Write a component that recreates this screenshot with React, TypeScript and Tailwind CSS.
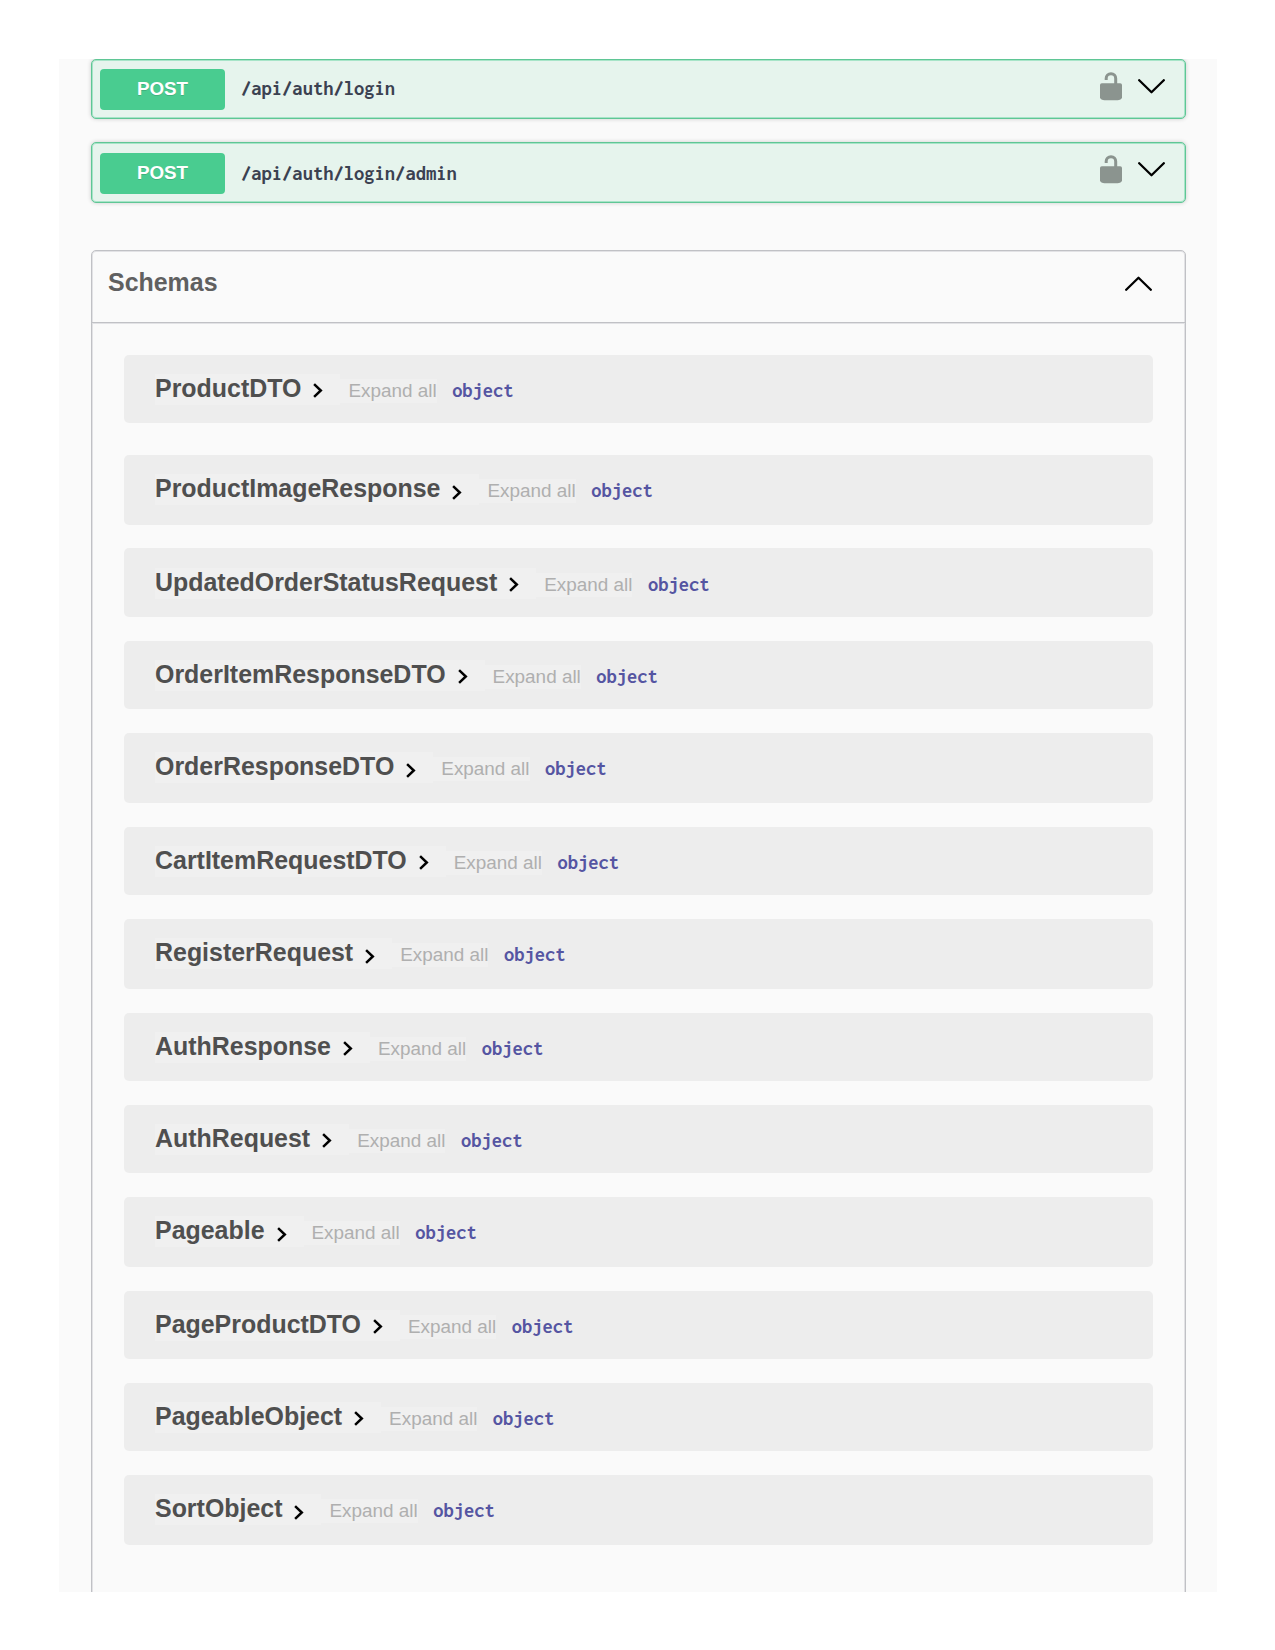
type Operation = { path: string; box: string; row: string; label: string; icons: string };
type Schema = { name: string; box: string; arrow: string };

const operations: Operation[] = [
  { path: '/api/auth/login', box: 'h-[60px]', row: 'pt-[9px]', label: 'mt-[5px]', icons: 'mt-[3px]' },
  { path: '/api/auth/login/admin', box: 'mt-[23px] h-[61px]', row: 'pt-[10px]', label: 'mt-[6px]', icons: 'mt-[2px]' },
];

const SHORT = 'pt-[9px]';
const TALL = 'pt-[11px]';

const schemas: Schema[] = [
  { name: 'ProductDTO', box: 'pt-[19px] h-[68px]', arrow: SHORT },
  { name: 'ProductImageResponse', box: 'pt-[19px] mt-8 h-[70px]', arrow: TALL },
  { name: 'UpdatedOrderStatusRequest', box: 'pt-5 mt-[23px] h-[69px]', arrow: SHORT },
  { name: 'OrderItemResponseDTO', box: 'pt-[19px] mt-6 h-[68px]', arrow: SHORT },
  { name: 'OrderResponseDTO', box: 'pt-[19px] mt-6 h-[70px]', arrow: TALL },
  { name: 'CartItemRequestDTO', box: 'pt-[19px] mt-6 h-[68px]', arrow: SHORT },
  { name: 'RegisterRequest', box: 'pt-[19px] mt-6 h-[70px]', arrow: TALL },
  { name: 'AuthResponse', box: 'pt-[19px] mt-6 h-[68px]', arrow: SHORT },
  { name: 'AuthRequest', box: 'pt-[19px] mt-6 h-[68px]', arrow: SHORT },
  { name: 'Pageable', box: 'pt-[19px] mt-6 h-[70px]', arrow: TALL },
  { name: 'PageProductDTO', box: 'pt-[19px] mt-6 h-[68px]', arrow: SHORT },
  { name: 'PageableObject', box: 'pt-[19px] mt-6 h-[68px]', arrow: SHORT },
  { name: 'SortObject', box: 'pt-[19px] mt-6 h-[70px]', arrow: TALL },
];

function UnlockIcon() {
  return (
    <svg className="h-[29px] w-[22px] shrink-0" viewBox="0 0 22 29" fill="none">
      <path d="M6.2 8V6.2C6.2 3.6 8.2 1.7 11 1.7s4.7 2 4.7 4.7V13" stroke="#8b948f" strokeWidth="3" />
      <path d="M1.8 11.3h18.4q1.8 0 1.8 1.8v12.2q0 1.5-1.5 2.2-1.5.7-3 .7H4.5q-1.5 0-3-.7Q0 26.8 0 25.3V13.1q0-1.8 1.8-1.8z" fill="#8b948f" />
    </svg>
  );
}

function Chevron({ up = false }: { up?: boolean }) {
  return (
    <svg className={up ? 'h-[15px] w-[27px] shrink-0 rotate-180' : 'h-[15px] w-[27px] shrink-0'} viewBox="0 0 27 15" fill="none">
      <path d="M1.2 1.2 13.5 13.2 25.8 1.2" stroke="#000" strokeWidth="2.3" strokeLinecap="round" strokeLinejoin="round" />
    </svg>
  );
}

function OperationBlock({ op }: { op: Operation }) {
  return (
    <div className={`flex items-start rounded-[5px] border border-[#5fc695] bg-[#e6f4ed] pl-2 pr-5 shadow-[0_0_4px_rgba(0,0,0,0.19),inset_0_0_0_1px_rgba(73,204,144,0.4)] ${op.box}`}>
      <div className={`flex w-full items-start ${op.row}`}>
        <span className="flex h-[41px] w-[125px] items-center justify-center rounded-[4px] bg-[#49cc90] pb-px text-[18.8px] font-bold text-white [text-shadow:0_1px_0_rgba(0,0,0,0.15)]">
          POST
        </span>
        <span className={`ml-4 font-['Inconsolata','Liberation_Mono',monospace] text-[20.55px] font-bold leading-7 text-[#3b4151] ${op.label}`}>{op.path}</span>
        <span className={`ml-auto flex items-start ${op.icons}`}>
          <UnlockIcon />
          <span className="ml-4 mt-[7px] flex">
            <Chevron />
          </span>
        </span>
      </div>
    </div>
  );
}

function SchemaRow({ schema }: { schema: Schema }) {
  return (
    <div className={`flex items-start rounded-[5px] bg-[#ededed] pl-[31px] ${schema.box}`}>
      <div className="flex h-[31px] items-start bg-[#f0f0f0] pr-[17px]">
        <span className="text-[24.95px] font-bold leading-[29px] text-[#4f4f4f]">{schema.name}</span>
        <span className={`ml-3 flex ${schema.arrow}`}>
          <svg className="h-[15px] w-[10px]" viewBox="0 0 10 15" fill="none">
            <path d="M1.1 1.1 7.8 7.5 1.1 13.9" stroke="#000" strokeWidth="2.5" />
          </svg>
        </span>
      </div>
      <span className="mt-[5px] h-6 bg-[#f0f0f0] pl-2 text-[18.9px] leading-[23px] text-[#afafaf]">Expand all</span>
      <span className="ml-[15.5px] mt-1 font-['Inconsolata','Liberation_Mono',monospace] text-[20.5px] font-bold leading-6 text-[#5555a2]">object</span>
    </div>
  );
}

export default function App() {
  return (
    <div className="min-h-[1650px] bg-white px-[59px] pt-[59px] font-['Liberation_Sans',Arial,sans-serif]">
      <main className="h-[1533px] w-[1158px] overflow-hidden bg-[#fafafa] pl-8 pr-[31px]">
        {operations.map((op) => (
          <OperationBlock key={op.path} op={op} />
        ))}
        <section className="mt-[47px] h-[1400px] rounded-t-[5px] border border-[#c0c1c5] shadow-[inset_0_0_0_1px_#e2e2e5]">
          <h2 className="flex h-[72px] items-start border-b border-[#c0c1c5] pl-4 pr-[33px] shadow-[0_1px_0_#e2e2e5]">
            <span className="mt-4 text-[24.95px] font-bold leading-[30px] text-[#606060]">Schemas</span>
            <span className="ml-auto mt-[25px] flex">
              <Chevron up />
            </span>
          </h2>
          <div className="px-8 pt-8">
            {schemas.map((schema) => (
              <SchemaRow key={schema.name} schema={schema} />
            ))}
          </div>
        </section>
      </main>
    </div>
  );
}
